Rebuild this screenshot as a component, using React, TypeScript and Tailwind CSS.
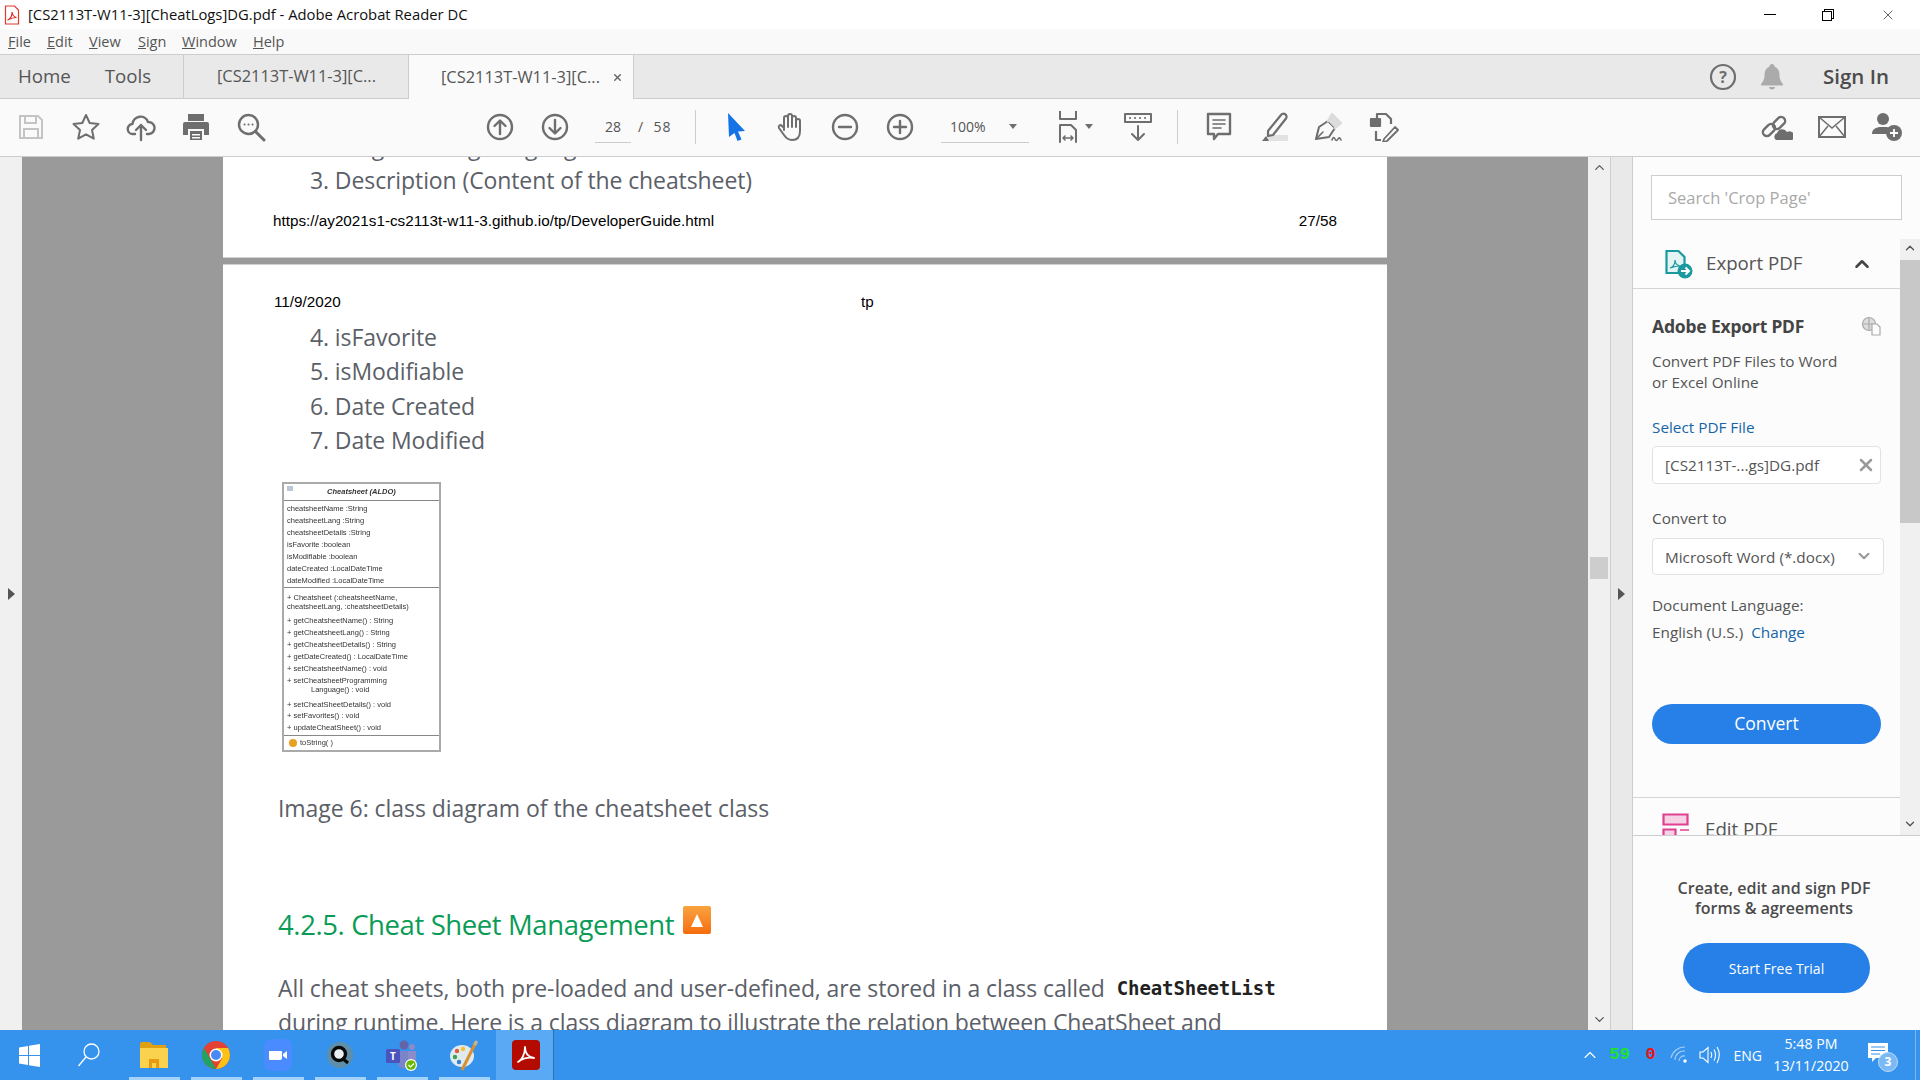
import React from 'react';
import { ChevronDown, ChevronUp, X } from 'lucide-react';

const ui = 'font-["Open_Sans","Noto_Sans",sans-serif]';

const Icon = ({ children, w = 28, h = 28, vb = '0 0 28 28' }: { children: React.ReactNode; w?: number; h?: number; vb?: string }) => (
  <svg width={w} height={h} viewBox={vb} fill="none" stroke="#6e6e6e" strokeWidth="2.4" strokeLinecap="round" strokeLinejoin="round">
    {children}
  </svg>
);

const Cell = ({ children, className = '' }: { children: React.ReactNode; className?: string }) => (
  <div className={`w-[55px] h-full flex items-center justify-center shrink-0 ${className}`}>{children}</div>
);

const Caret = () => <div className="w-0 h-0 border-x-[4px] border-x-transparent border-t-[5px] border-t-[#6e6e6e]" />;

const menuItems = [
  { u: 'F', rest: 'ile', w: 'w-[39px]' },
  { u: 'E', rest: 'dit', w: 'w-[42px]' },
  { u: 'V', rest: 'iew', w: 'w-[49px]' },
  { u: 'S', rest: 'ign', w: 'w-[44px]' },
  { u: 'W', rest: 'indow', w: 'w-[71px]' },
  { u: 'H', rest: 'elp', w: 'w-[40px]' },
];

function TitleBar() {
  return (
    <div className="h-[29px] bg-white flex items-center shrink-0">
      <svg className="ml-[4px]" width="16" height="20" viewBox="0 0 16 20" fill="none">
        <path d="M1.5 1h9l4 4v14h-13z" fill="#fff" stroke="#e23b2e" strokeWidth="1.2" />
        <path d="M3.5 15c3-1 5-5 4.5-8 .5 3 2 5 4.5 5.5-3 0-6 1-9 2.5z" stroke="#d9261c" strokeWidth="1.1" />
      </svg>
      <span className="ml-[8px] text-[14.800px] text-[#111]">[CS2113T-W11-3][CheatLogs]DG.pdf - Adobe Acrobat Reader DC</span>
      <div className="ml-auto flex items-center h-full">
        <div className="w-[12px] h-[1px] bg-black mr-[46px]" />
        <div className="relative w-[12px] h-[12px] mr-[46px]">
          <div className="absolute right-0 top-0 w-[10px] h-[10px] border border-black" />
          <div className="absolute left-0 bottom-0 w-[10px] h-[10px] border border-black bg-white" />
        </div>
        <X className="mr-[24px]" size={16} strokeWidth={1} color="#111" />
      </div>
    </div>
  );
}

function MenuBar() {
  return (
    <div className="h-[25px] bg-[#f9f9f9] flex items-center pl-[8px] text-[14.500px] text-[#555] shrink-0">
      {menuItems.map((m) => (
        <span key={m.u} className={m.w}>
          <span className="underline">{m.u}</span>
          {m.rest}
        </span>
      ))}
    </div>
  );
}

function TabBar() {
  return (
    <div className="h-[45px] bg-[#e9e9e9] border-y border-[#cdcdcd] flex items-stretch shrink-0 text-[#555]">
      <div className="w-[183px] flex items-center text-[18.700px] pl-[18px] gap-[34px]">
        <span>Home</span>
        <span>Tools</span>
      </div>
      <div className="w-[225px] border-l border-[#cdcdcd] flex items-center pl-[33px] text-[16.400px]">[CS2113T-W11-3][C...</div>
      <div className="w-[226px] -mb-px bg-[#fafafa] border-x border-[#cdcdcd] flex items-center pl-[32px] text-[16.400px]">
        [CS2113T-W11-3][C...
        <X className="ml-[12px]" size={11} strokeWidth={3} color="#666" />
      </div>
      <div className="ml-auto flex items-center">
        <svg width="28" height="28" viewBox="0 0 28 28" fill="none">
          <circle cx="14" cy="14" r="12" stroke="#6e6e6e" strokeWidth="2.2" />
          <text x="14" y="19.5" textAnchor="middle" fontSize="16" fontWeight="700" fill="#6e6e6e" fontFamily="Open Sans">?</text>
        </svg>
        <svg className="ml-[23px]" width="24" height="27" viewBox="0 0 24 27" fill="#ababab">
          <path d="M12 1c1.5 0 2.5 1 2.5 2.5C18 5 19.5 8 19.5 12c0 4 1 6.5 3.5 9v1.500H1V21c2.500-2.500 3.500-5 3.500-9 0-4 1.500-7 5-8.500C9.500 2 10.500 1 12 1zM9 24h6c0 1.500-1.300 2.500-3 2.500S9 25.500 9 24z" />
        </svg>
        <span className="ml-[39px] mr-[31px] text-[20.500px] font-semibold text-[#4b4b4b]">Sign In</span>
      </div>
    </div>
  );
}

function Toolbar() {
  return (
    <div className="h-[58px] bg-[#fafafa] border-b border-[#cdcdcd] flex items-center pl-[3px] pb-[2px] shrink-0 text-[#555]">
      <Cell>
        <svg width="26" height="26" viewBox="0 0 26 26" fill="none" stroke="#c4c4c4" strokeWidth="2">
          <path d="M2 2h18l4 4v18H2z" />
          <path d="M7 2v7h11V2M6 24v-9h14v9" />
        </svg>
      </Cell>
      <Cell>
        <Icon w={30} h={30} vb="0 0 30 30">
          <path strokeWidth="2" d="M15 3l3.700 8 8.800 1-6.500 6 1.800 8.700L15 22.300 7.200 26.700 9 18l-6.500-6 8.800-1z" />
        </Icon>
      </Cell>
      <Cell>
        <Icon w={30} h={30} vb="0 0 30 30">
          <path d="M9 22H7a5 5 0 0 1-.5-10A8 8 0 0 1 22 10a6 6 0 0 1 1 12h-2" />
          <path d="M15 28V13M10 18l5-5 5 5" />
        </Icon>
      </Cell>
      <Cell>
        <svg width="26" height="28" viewBox="0 0 26 28" fill="#6e6e6e">
          <path d="M5 1h16v7H5zM2 9h22a2 2 0 0 1 2 2v11h-5v-6H5v6H0V11a2 2 0 0 1 2-2z" />
          <path d="M7 18h12v9H7z" />
          <path d="M9 21h8v1.500H9zM9 24h8v1.500H9z" fill="#fafafa" />
        </svg>
      </Cell>
      <Cell>
        <Icon w={30} h={30} vb="0 0 30 30">
          <circle cx="12.500" cy="12.500" r="9.500" />
          <path d="M19.500 19.500l8.500 8.500" strokeWidth="3" />
          <path d="M8.500 12.500h.1M12.500 12.500h.1M16.500 12.500h.1" strokeWidth="2" />
        </Icon>
      </Cell>
      <Cell className="ml-[194px]">
        <Icon>
          <circle cx="14" cy="14" r="12" />
          <path d="M14 21V8M8.500 13L14 7.500 19.500 13" />
        </Icon>
      </Cell>
      <Cell>
        <Icon>
          <circle cx="14" cy="14" r="12" />
          <path d="M14 7v13M8.500 15l5.500 5.500 5.500-5.500" />
        </Icon>
      </Cell>
      <div className="ml-[13px] w-[36px] h-[33px] border-b border-[#cdcdcd] flex items-center justify-center text-[14px]">28</div>
      <span className="ml-[7px] text-[14px] w-[56px] tracking-[1px]">/&nbsp;&nbsp;58</span>
      <div className="w-px h-[34px] bg-[#cdcdcd] ml-[1px] mr-[13px]" />
      <Cell>
        <svg width="20" height="30" viewBox="0 0 20 30" fill="#1473e6">
          <path d="M1 1l17 18-7 .5 3.500 8-4 1.500-3-8L2 25z" />
        </svg>
      </Cell>
      <Cell className="-ml-[2px]">
        <Icon w={30} h={32} vb="0 0 30 32">
          <path strokeWidth="2" d="M9 19V7a2 2 0 0 1 4 0v-2a2 2 0 0 1 4 0v2a2 2 0 0 1 4 0v3a2 2 0 0 1 4 0v10c0 6-3 9-8 9-4 0-6-2-8-5l-5-7c-1-2 1-4 3-2l2 2" />
          <path strokeWidth="2" d="M13 6v10M17 6v10M21 9v7" />
        </Icon>
      </Cell>
      <Cell>
        <Icon>
          <circle cx="14" cy="14" r="12" />
          <path d="M8 14h12" />
        </Icon>
      </Cell>
      <Cell>
        <Icon>
          <circle cx="14" cy="14" r="12" />
          <path d="M8 14h12M14 8v12" />
        </Icon>
      </Cell>
      <div className="ml-[14px] w-[88px] h-[33px] border-b border-[#cdcdcd] flex items-center pl-[9px] text-[14px] gap-[23px]">
        100%
        <Caret />
      </div>
      <div className="ml-[12px] w-[66px] flex items-center gap-[4px] pl-[16px]">
        <Icon w={24} h={32} vb="0 0 24 32">
          <path strokeWidth="2" d="M3 0v8h16V0" />
          <path strokeWidth="2" d="M3 31V14h11l5 5v12" />
          <path strokeWidth="1.600" d="M6 27h10M8 25l-2 2 2 2M14 25l2 2-2 2" />
        </Icon>
        <Caret />
      </div>
      <Cell className="ml-[3px]">
        <Icon w={28} h={30} vb="0 0 28 30">
          <path strokeWidth="2" d="M1 2h26v8H1z" />
          <path strokeWidth="2" d="M6 6h.1M11 6h.1M16 6h.1M21 6h.1M14 14v14M8 22l6 6 6-6" />
        </Icon>
      </Cell>
      <div className="w-px h-[34px] bg-[#cdcdcd] ml-[12px] mr-[13px]" />
      <Cell>
        <Icon w={26} h={30} vb="0 0 26 30">
          <path d="M2 2h22v20H12l-4 5v-5H2z" />
          <path strokeWidth="1.600" d="M7 8h12M7 12h12M7 16h8" />
        </Icon>
      </Cell>
      <Cell>
        <svg width="30" height="30" viewBox="0 0 30 30" fill="none">
          <path d="M3 29h26v-6H10z" fill="#e2e2e2" />
          <path d="M9 19L22 3a2.500 2.500 0 0 1 5 3.500L14 23l-5 1z" stroke="#6e6e6e" strokeWidth="2.200" strokeLinejoin="round" />
          <path d="M7 24l-4 5h7z" fill="#6e6e6e" />
        </svg>
      </Cell>
      <Cell>
        <Icon w={30} h={30} vb="0 0 30 30">
          <path d="M2 27l3-12 9-6 7 7-6 9z" strokeWidth="2" />
          <path d="M2 27l7-7" strokeWidth="1.600" />
          <path d="M14 9l4-7 9 9-6 5" fill="#dcdcdc" stroke="#dcdcdc" />
          <path d="M18 28c1-3 2-3 3-1s2 2 3 0 2-1 3 1" strokeWidth="1.600" />
        </Icon>
      </Cell>
      <Cell>
        <svg width="30" height="30" viewBox="0 0 30 30" fill="none" stroke="#6e6e6e" strokeWidth="2.200" strokeLinejoin="round">
          <path d="M8 7V2h9l5 5v5M7 19v9h5" />
          <path d="M2 7h9v7H2z" fill="#6e6e6e" />
          <path d="M15 27l11-12 3 3-11 11-4 1z" strokeWidth="1.800" />
        </svg>
      </Cell>
      <div className="ml-auto flex items-center h-full pr-[6px]">
        <Cell>
          <svg width="32" height="28" viewBox="0 0 32 28" fill="none">
            <g stroke="#6e6e6e" strokeWidth="2.400">
              <rect x="1" y="13" width="14" height="8" rx="4" transform="rotate(-45 8 17)" />
              <rect x="11" y="6" width="14" height="8" rx="4" transform="rotate(-45 18 10)" />
            </g>
            <path d="M15 27a4 4 0 0 1 1-7 5.500 5.500 0 0 1 10-1 4.500 4.500 0 0 1 5 8z" fill="#6e6e6e" />
          </svg>
        </Cell>
        <Cell>
          <svg width="28" height="22" viewBox="0 0 28 22" fill="none" stroke="#6e6e6e" strokeWidth="2">
            <path d="M1 1h26v20H1z" />
            <path d="M1 1l13 11L27 1M1 21l9-11M27 21l-9-11" strokeWidth="1.500" />
          </svg>
        </Cell>
        <Cell>
          <svg width="32" height="30" viewBox="0 0 32 30" fill="#6e6e6e">
            <circle cx="12" cy="7" r="6" />
            <path d="M1 22c0-5 4-6 7-7h8c2 1 3 2 4 3-2 1-3 2-3 4z" />
            <circle cx="23" cy="21" r="8" />
            <path d="M19 21h8M23 17v8" stroke="#fff" strokeWidth="1.800" />
          </svg>
        </Cell>
      </div>
    </div>
  );
}

const attrs = ['cheatsheetName :String', 'cheatsheetLang :String', 'cheatsheetDetails :String', 'isFavorite :boolean', 'isModifiable :boolean', 'dateCreated :LocalDateTime', 'dateModified :LocalDateTime'];

function ClassDiagram() {
  return (
    <div className="ml-[59px] mt-[25px] w-[159px] h-[270px] border-2 border-[#aaa] bg-white flex flex-col blur-[0.6px] font-['Liberation_Sans',sans-serif] text-[7.500px] text-[#333] leading-[12px] shrink-0">
      <div className="h-[17px] border-b border-[#888] flex items-center justify-center italic font-bold relative">
        <div className="absolute left-[3px] top-[2px] w-[6px] h-[5px] bg-[#b9c7d8]" />
        Cheatsheet (ALDO)
      </div>
      <div className="h-[87px] border-b border-[#888] pl-[3px] pt-[2px] flex flex-col">
        {attrs.map((a) => (
          <div key={a} className="h-[12px]">{a}</div>
        ))}
      </div>
      <div className="h-[148px] border-b border-[#888] pl-[3px] pt-[5px] leading-[9px] flex flex-col">
        <div>+ Cheatsheet (:cheatsheetName,</div>
        <div className="mb-[5px]">cheatsheetLang, :cheatsheetDetails)</div>
        <div className="h-[12px]">+ getCheatsheetName() : String</div>
        <div className="h-[12px]">+ getCheatsheetLang() : String</div>
        <div className="h-[12px]">+ getCheatsheetDetails() : String</div>
        <div className="h-[12px]">+ getDateCreated() : LocalDateTime</div>
        <div className="h-[12px]">+ setCheatsheetName() : void</div>
        <div>+ setCheatsheetProgramming</div>
        <div className="pl-[24px] mb-[6px]">Language() : void</div>
        <div className="h-[12px]">+ setCheatSheetDetails() : void</div>
        <div className="h-[12px]">+ setFavorites() : void</div>
        <div className="h-[12px]">+ updateCheatSheet() : void</div>
      </div>
      <div className="flex-1 flex items-center pl-[5px] gap-[3px]">
        <div className="w-[8px] h-[8px] rounded-full bg-[#e8a020]" />
        <span>toString( )</span>
      </div>
    </div>
  );
}

function DocPages() {
  return (
    <div className="w-[1164px] h-full ml-[201px] flex flex-col overflow-hidden shrink-0 text-[#5b6068] font-['Open_Sans',sans-serif]">
      <div className="h-[101px] bg-white border-b border-[#d0d0d0] shrink-0 overflow-hidden flex flex-col">
        <div className="-mt-[28px] text-[23px] leading-[34px] pl-[87px] tracking-[-0.1px]">
          <div>2. Programming Language</div>
          <div>3. Description (Content of the cheatsheet)</div>
        </div>
        <div className="mt-[13px] pl-[50px] pr-[50px] flex justify-between font-['Liberation_Sans',sans-serif] text-[15.250px] text-black">
          <span>https://ay2021s1-cs2113t-w11-3.github.io/tp/DeveloperGuide.html</span>
          <span>27/58</span>
        </div>
      </div>
      <div className="h-[6px] bg-[#9a9a9a] shrink-0" />
      <div className="flex-1 bg-white border-t border-[#d0d0d0] overflow-hidden flex flex-col">
        <div className="mt-[28px] pl-[51px] flex font-['Liberation_Sans',sans-serif] text-[15.250px] leading-[18px] text-black">
          <span className="w-[587px]">11/9/2020</span>
          <span>tp</span>
        </div>
        <div className="mt-[9px] pl-[87px] text-[23px] leading-[34.300px] tracking-[-0.1px]">
          <div>4. isFavorite</div>
          <div>5. isModifiable</div>
          <div>6. Date Created</div>
          <div>7. Date Modified</div>
        </div>
        <ClassDiagram />
        <div className="mt-[39px] pl-[55px] text-[23px] leading-[34px] tracking-[-0.05px]">Image 6: class diagram of the cheatsheet class</div>
        <div className="mt-[80px] pl-[55px] flex items-start h-[40px]">
          <span className="text-[27.500px] leading-[40px] text-[#0a9c57] tracking-[-0.4px]">4.2.5. Cheat Sheet Management</span>
          <div className="ml-[9px] mt-[1px] w-[28px] h-[28px] rounded-[2px] bg-gradient-to-b from-[#f7a33e] to-[#f66c0a] flex items-center justify-center">
            <div className="w-0 h-0 border-x-[6px] border-x-transparent border-b-[13px] border-b-white" />
          </div>
        </div>
        <div className="mt-[26px] pl-[55px] text-[23px] leading-[34px] tracking-[-0.1px] whitespace-nowrap">
          <div className="flex items-center">
            All cheat sheets, both pre-loaded and user-defined, are stored in a class called
            <span className="ml-[12px] font-['DejaVu_Sans_Mono',monospace] font-bold text-[19px] text-[#222]">CheatSheetList</span>
          </div>
          <div>during runtime. Here is a class diagram to illustrate the relation between CheatSheet and</div>
        </div>
      </div>
    </div>
  );
}

function DocScrollbar() {
  return (
    <div className="w-[22px] h-full bg-[#f0f0f0] flex flex-col items-center shrink-0 pt-[3px] pb-[3px]">
      <ChevronUp size={15} strokeWidth={2} color="#555" />
      <div className="w-[18px] h-[22px] bg-[#cdcdcd] mt-[382px]" />
      <ChevronDown className="mt-auto" size={15} strokeWidth={2} color="#555" />
    </div>
  );
}

function RightPanel() {
  return (
    <div className="flex-1 bg-[#fcfcfc] border-l border-[#cdcdcd] flex flex-col text-[#555] text-[15.300px]">
      <div className="h-[678px] flex flex-col overflow-hidden shrink-0">
        <div className="h-[82px] pl-[18px] pr-[18px] pt-[18px] shrink-0">
          <div className="h-[45px] border border-[#cdcdcd] bg-white flex items-center pl-[16px] pt-[1px] text-[16.500px] text-[#a9a9a9]">Search 'Crop Page'</div>
        </div>
        <div className="flex flex-1 min-h-0">
          <div className="w-[267px] flex flex-col overflow-hidden shrink-0">
            <div className="h-[50px] border-b border-[#d5d5d5] flex items-center pl-[32px] shrink-0">
              <svg width="28" height="30" viewBox="0 0 28 30" fill="none">
                <path d="M1.500 2h12l6 6v16H1.500z" fill="#e4f3f3" stroke="#1a9a9f" strokeWidth="2.200" />
                <path d="M5 19c3-1 5-4 5-8 0 3 1 5 5 6-4 0-7 1-10 2z" stroke="#1a9a9f" strokeWidth="1.200" />
                <circle cx="20" cy="22" r="7.500" fill="#1a9a9f" />
                <path d="M16 22h7M20.500 18.500L24 22l-3.500 3.500" stroke="#fff" strokeWidth="2" />
              </svg>
              <span className="ml-[13px] text-[18.700px]">Export PDF</span>
              <ChevronUp className="ml-[49px]" size={22} strokeWidth={2.800} color="#444" />
            </div>
            <div className="pl-[19px] pr-[18px] flex flex-col">
              <div className="mt-[26px] h-[22px] flex items-center justify-between">
                <span className="text-[17.500px] font-bold text-[#444] font-['Noto_Sans',sans-serif] tracking-[-0.2px]">Adobe Export PDF</span>
                <svg width="20" height="20" viewBox="0 0 20 20" fill="none" stroke="#aaa" strokeWidth="1.200" className="mr-[1px]">
                  <circle cx="8" cy="8" r="6.500" fill="#ddd" />
                  <path d="M1.500 8h13M8 1.500v13" />
                  <path d="M11 8h5l3 3v8h-8z" fill="#fcfcfc" />
                </svg>
              </div>
              <div className="mt-[14px] leading-[21px]">
                Convert PDF Files to Word<br />or Excel Online
              </div>
              <div className="mt-[23px] text-[#1565a8] leading-[22px]">Select PDF File</div>
              <div className="mt-[8px] w-[229px] h-[38px] border border-[#e2e2e2] rounded-[4px] bg-white flex items-center justify-between pl-[12px] pr-[4px]">
                <span>[CS2113T-...gs]DG.pdf</span>
                <X size={20} strokeWidth={3} color="#9a9a9a" />
              </div>
              <div className="mt-[23px] leading-[22px]">Convert to</div>
              <div className="mt-[9px] w-[232px] h-[37px] border border-[#e2e2e2] rounded-[4px] bg-white flex items-center justify-between pl-[12px] pr-[10px] pt-[1px] whitespace-nowrap">
                <span>Microsoft Word (*.docx)</span>
                <ChevronDown className="-mt-[3px]" size={18} strokeWidth={2.800} color="#999" />
              </div>
              <div className="mt-[19px] leading-[22px]">Document Language:</div>
              <div className="mt-[5px] leading-[22px]">
                English (U.S.)<span className="ml-[8px] text-[#1565a8]">Change</span>
              </div>
              <div className="mt-[61px] w-[229px] h-[40px] rounded-full bg-[#2680e8] text-white text-[17.600px] pb-[1px] flex items-center justify-center">Convert</div>
              <div className="mt-[53px] -ml-[19px] -mr-[18px] h-px bg-[#d5d5d5] shrink-0" />
              <div className="mt-[15px] flex items-start -ml-[3px] h-[30px] shrink-0">
                <svg className="shrink-0 ml-[13px]" width="28" height="30" viewBox="0 0 28 30" fill="none">
                  <path d="M1.500 1.500h24v10h-24z" fill="#f6d3e4" stroke="#e0408f" strokeWidth="2.200" />
                  <path d="M1.500 16.500h12v10h-12z" fill="#f6d3e4" stroke="#e0408f" strokeWidth="2.200" />
                  <path d="M18 17h9" stroke="#e0408f" strokeWidth="1.500" />
                </svg>
                <span className="ml-[15px] mt-[2px] text-[18.700px] leading-[28px]">Edit PDF</span>
              </div>
            </div>
          </div>
          <div className="flex-1 bg-[#f0f0f0] flex flex-col items-center">
            <div className="h-[21px] w-full flex items-center justify-center pb-[3px]">
              <ChevronUp size={14} strokeWidth={2.400} color="#555" />
            </div>
            <div className="h-[263px] w-full bg-[#c8c8c8]" />
            <ChevronDown className="mt-auto mb-[4px]" size={14} strokeWidth={2.400} color="#555" />
          </div>
        </div>
      </div>
      <div className="flex-1 border-t border-[#cdcdcd] flex flex-col items-center">
        <div className="mt-[42px] pr-[5px] text-center font-semibold text-[#4b4b4b] text-[16px] leading-[20px]">
          Create, edit and sign PDF<br />forms & agreements
        </div>
        <div className="mt-[25px] w-[187px] h-[50px] rounded-full bg-[#2680e8] text-white text-[14px] flex items-center justify-center">Start Free Trial</div>
      </div>
    </div>
  );
}

function Workspace() {
  return (
    <div className="flex-1 min-h-0 flex bg-[#f0f0f0]">
      <div className="w-[22px] h-full bg-[#f0f0f0] flex items-center justify-center shrink-0">
        <div className="w-0 h-0 border-y-[6px] border-y-transparent border-l-[7px] border-l-[#555]" />
      </div>
      <div className="w-[1566px] h-full bg-[#9a9a9a] shrink-0 flex">
        <DocPages />
      </div>
      <DocScrollbar />
      <div className="w-[22px] h-full bg-[#e9e9e9] border-l border-[#cdcdcd] flex items-center justify-center shrink-0">
        <div className="w-0 h-0 border-y-[6px] border-y-transparent border-l-[7px] border-l-[#555]" />
      </div>
      <RightPanel />
    </div>
  );
}

const TaskSlot = ({ children }: { children: React.ReactNode }) => (
  <div className="w-[62px] h-full flex items-center justify-center relative shrink-0 pr-[2px]">
    {children}
    <div className="absolute bottom-0 left-[5px] right-[6px] h-[3px] bg-[#a3d2fa]" />
  </div>
);

function Taskbar() {
  return (
    <div className="h-[50px] bg-[#3593ee] flex items-center shrink-0 text-white font-['Open_Sans',sans-serif]">
      <div className="w-[59px] flex justify-center shrink-0">
        <svg width="21" height="23" viewBox="0 0 21 23" fill="#fff">
          <path d="M0 3.500L9 2v9H0zM10 1.800L21 0v11H10zM0 12h9v9L0 19.500zM10 12h11v11l-11-1.800z" />
        </svg>
      </div>
      <div className="w-[65px] flex justify-center shrink-0 pr-[5px]">
        <svg width="22" height="24" viewBox="0 0 22 24" fill="none" stroke="#fff" strokeWidth="1.300">
          <circle cx="13.500" cy="8.500" r="7.500" />
          <path d="M8 14l-7.500 9" />
        </svg>
      </div>
      <TaskSlot>
        <svg width="28" height="26" viewBox="0 0 28 26">
          <path d="M0 2a2 2 0 0 1 2-2h8l3 3h13v5H0z" fill="#e0a010" />
          <path d="M0 6h28v20H0z" fill="#fbd24d" />
          <path d="M9 17h10v9h-3v-5h-4v5H9z" fill="#e89a12" />
        </svg>
      </TaskSlot>
      <TaskSlot>
        <svg width="28" height="28" viewBox="0 0 28 28">
          <circle cx="14" cy="14" r="14" fill="#e34133" />
          <path d="M14 28A14 14 0 0 1 1.900 7L8 17.500 14 28z" fill="#1fa463" />
          <path d="M14 28l6-10.500L14 7h12.100A14 14 0 0 1 14 28z" fill="#fbc116" />
          <circle cx="14" cy="14" r="6.500" fill="#fff" />
          <circle cx="14" cy="14" r="5" fill="#4a89f3" />
        </svg>
      </TaskSlot>
      <TaskSlot>
        <svg width="28" height="32" viewBox="0 0 28 32">
          <rect width="28" height="32" rx="7" fill="#4a8cff" />
          <path d="M5 12h12a1 1 0 0 1 1 1v6a2 2 0 0 1-2 2H6a1 1 0 0 1-1-1zM19 15l4-3v8l-4-3z" fill="#fff" />
        </svg>
      </TaskSlot>
      <TaskSlot>
        <svg width="26" height="28" viewBox="0 0 26 28" fill="none">
          <circle cx="13" cy="14" r="13" fill="#5f8ea8" />
          <circle cx="12" cy="13" r="6.500" stroke="#0a0a0a" strokeWidth="3.400" fill="#e8f0f4" />
          <path d="M15 17l6 5" stroke="#0a0a0a" strokeWidth="3" />
        </svg>
      </TaskSlot>
      <TaskSlot>
        <svg width="32" height="32" viewBox="0 0 32 32">
          <circle cx="18" cy="6" r="4.500" fill="#6264a7" />
          <circle cx="26" cy="8" r="3" fill="#8b8cc7" />
          <path d="M12 12h11v12a5 5 0 0 1-11 0z" fill="#7b83c9" />
          <path d="M22 12h8v9a4 4 0 0 1-8 0z" fill="#8b8cc7" />
          <rect y="10" width="14" height="14" rx="1.500" fill="#4b53bc" />
          <text x="7" y="21" textAnchor="middle" fontSize="10" fontWeight="700" fill="#fff" fontFamily="Open Sans">T</text>
          <circle cx="25" cy="26" r="6" fill="#fff" />
          <circle cx="25" cy="26" r="4.800" fill="#6bb700" />
          <path d="M22.500 26l2 2 3.500-3.500" stroke="#fff" strokeWidth="1.200" fill="none" />
        </svg>
      </TaskSlot>
      <TaskSlot>
        <svg width="28" height="32" viewBox="0 0 28 32">
          <ellipse cx="12" cy="17" rx="12" ry="11" fill="#dfe9ee" />
          <circle cx="5" cy="18" r="2.200" fill="#3aa34c" />
          <circle cx="7" cy="12" r="2.200" fill="#e55a3c" />
          <circle cx="13" cy="10" r="2.200" fill="#f2c230" />
          <circle cx="9" cy="23" r="2.200" fill="#2f7fd8" />
          <path d="M12 31L26 3" stroke="#d89030" strokeWidth="3" />
          <path d="M23 5l3-4 2 2-2 4z" fill="#c6b48c" />
        </svg>
      </TaskSlot>
      <div className="w-[58px] h-full bg-[#5aa9f5] flex items-center justify-center shrink-0 border-r border-[#2a6fb0] pl-[2px]">
        <svg width="28" height="30" viewBox="0 0 28 30" fill="none">
          <rect width="28" height="30" rx="4" fill="#b30b00" />
          <path d="M6 22c4-2 7-8 7-15 0 6 3 10 9 11-6-1-12 1-16 4z" stroke="#fff" strokeWidth="1.800" strokeLinejoin="round" />
        </svg>
      </div>
      <div className="ml-auto flex items-center h-full">
        <ChevronUp className="mr-[-2px]" size={20} strokeWidth={1.300} color="#fff" />
        <span className="ml-[12px] w-[22px] text-[17px] font-bold text-[#1be52a] font-['Liberation_Mono',monospace]">59</span>
        <span className="ml-[14px] w-[12px] text-[17px] text-[#ee1111] font-['Liberation_Mono',monospace] font-bold">0</span>
        <svg className="ml-[12px]" width="20" height="18" viewBox="0 0 20 18" fill="none" stroke="#a8cff5" strokeWidth="1.100">
          <path d="M1 12a14 14 0 0 1 14-11M5 14a9 9 0 0 1 10-9M9 15a5 5 0 0 1 6-5" />
          <circle cx="15" cy="15" r="1.700" fill="#fff" stroke="none" />
        </svg>
        <svg className="ml-[9px]" width="21" height="18" viewBox="0 0 21 18" fill="none" stroke="#fff" strokeWidth="1.100">
          <path d="M1 6h3l5-4.500v15L4 12H1zM12 6c1 2 1 4 0 6M15 3.500c2 3 2 8 0 11M18 1c3 4.500 3 11 0 16" />
        </svg>
        <span className="ml-[14px] text-[14px]">ENG</span>
        <div className="ml-[11px] w-[76px] text-center text-[14.200px] leading-[22px] whitespace-nowrap">
          5:48 PM<br />13/11/2020
        </div>
        <div className="relative ml-[19px] mr-[27px] w-[20px] h-[22px] -mt-[3px]">
          <svg width="20" height="20" viewBox="0 0 20 20" fill="#fff">
            <path d="M0 0h20v15H8l-4 4v-4H0z" />
            <path d="M3 4h14M3 7.500h14M3 11h9" stroke="#3593ee" strokeWidth="1" />
          </svg>
          <div className="absolute -right-[10px] -bottom-[7px] w-[20px] h-[20px] rounded-full bg-[#7ab9f3] border border-[#b9dcfa] flex items-center justify-center text-[12px] font-bold">3</div>
        </div>
        <div className="w-px h-full bg-[#7ab9f3]" />
        <div className="w-[4px]" />
      </div>
    </div>
  );
}

export default function App() {
  return (
    <div className={`w-[1920px] h-[1080px] overflow-hidden flex flex-col bg-white ${ui}`}>
      <TitleBar />
      <MenuBar />
      <TabBar />
      <Toolbar />
      <Workspace />
      <Taskbar />
    </div>
  );
}
